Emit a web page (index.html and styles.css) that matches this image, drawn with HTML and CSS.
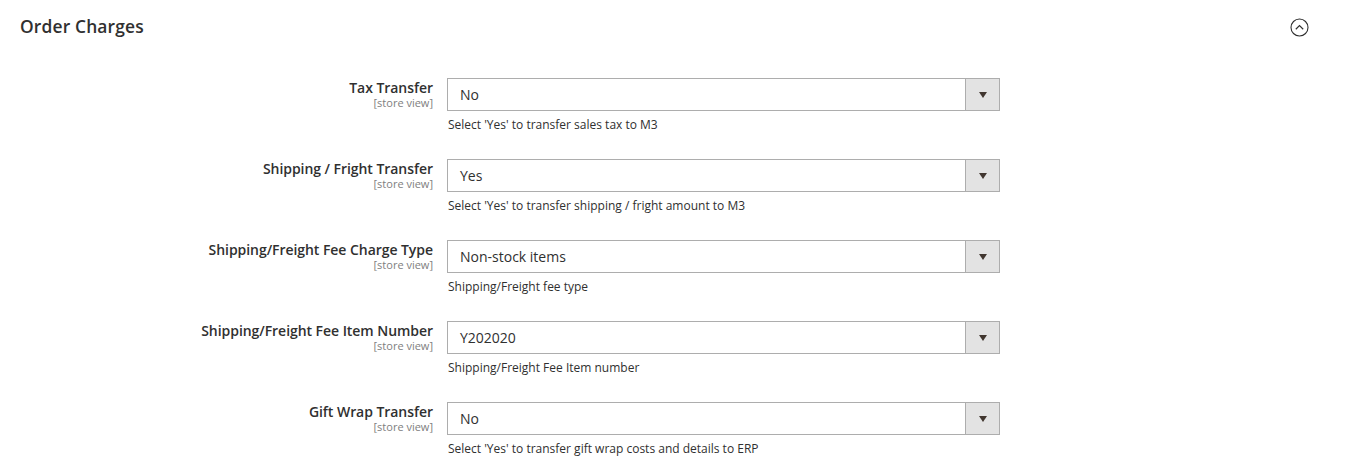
FILE: index.html
```html
<!DOCTYPE html>
<html lang="en">
<head>
<meta charset="utf-8">
<title>Order Charges</title>
<link rel="stylesheet" href="styles.css">
</head>
<body>
<section class="section">
  <header class="section-head">
    <h2 class="section-title">Order Charges</h2>
    <span class="collapse-icon" aria-hidden="true">
      <svg width="19" height="19" viewBox="0 0 19 19"><circle cx="9.5" cy="9.5" r="8.5" fill="none" stroke="#303030" stroke-width="1.1"/><path d="M5.8 11.2 L9.5 7.6 L13.2 11.2" fill="none" stroke="#303030" stroke-width="1.2"/></svg>
    </span>
  </header>
  <div class="rows">
    <div class="row">
      <div class="label"><span class="label-text">Tax Transfer</span><span class="scope">[store view]</span></div>
      <div class="control">
        <div class="select"><span class="value">No</span><span class="arrow"></span></div>
        <p class="note">Select 'Yes' to transfer sales tax to M3</p>
      </div>
    </div>
    <div class="row">
      <div class="label"><span class="label-text">Shipping / Fright Transfer</span><span class="scope">[store view]</span></div>
      <div class="control">
        <div class="select"><span class="value">Yes</span><span class="arrow"></span></div>
        <p class="note">Select 'Yes' to transfer shipping / fright amount to M3</p>
      </div>
    </div>
    <div class="row">
      <div class="label"><span class="label-text">Shipping/Freight Fee Charge Type</span><span class="scope">[store view]</span></div>
      <div class="control">
        <div class="select"><span class="value">Non-stock items</span><span class="arrow"></span></div>
        <p class="note">Shipping/Freight fee type</p>
      </div>
    </div>
    <div class="row">
      <div class="label"><span class="label-text">Shipping/Freight Fee Item Number</span><span class="scope">[store view]</span></div>
      <div class="control">
        <div class="select"><span class="value">Y202020</span><span class="arrow"></span></div>
        <p class="note">Shipping/Freight Fee Item number</p>
      </div>
    </div>
    <div class="row">
      <div class="label"><span class="label-text">Gift Wrap Transfer</span><span class="scope">[store view]</span></div>
      <div class="control">
        <div class="select"><span class="value">No</span><span class="arrow"></span></div>
        <p class="note">Select 'Yes' to transfer gift wrap costs and details to ERP</p>
      </div>
    </div>
  </div>
</section>
</body>
</html>
```
FILE: styles.css
```css
* { box-sizing: border-box; }
html, body { margin: 0; padding: 0; background: #fff; }
body {
  font-family: "Open Sans", "Liberation Sans", sans-serif;
  color: #303030;
  width: 1346px;
  height: 475px;
  overflow: hidden;
}
.section { padding: 0 0 0 20px; }
.section-head {
  display: flex;
  align-items: center;
  justify-content: space-between;
  height: 52px;
  padding-right: 37px;
}
.section-title {
  margin: 0;
  font-size: 17.4px;
  font-weight: 600;
  color: #303030;
  letter-spacing: 0.15px;
  line-height: 20px;
}
.collapse-icon { display: flex; padding-top: 2px; }
.rows { padding-top: 26px; }
.row {
  display: flex;
  align-items: flex-start;
  gap: 14px;
  height: 81px;
}
.label {
  width: 413px;
  display: flex;
  flex-direction: column;
  align-items: flex-end;
  padding-top: 1px;
}
.label-text {
  font-size: 14px;
  font-weight: 600;
  line-height: 18px;
  color: #303030;
  letter-spacing: -0.05px;
}
.scope {
  font-size: 11px;
  line-height: 11px;
  color: #808080;
  margin-top: 0;
}
.control { width: 553px; }
.select {
  display: flex;
  height: 33px;
  border: 1px solid #adadad;
  background: #fff;
}
.value {
  flex: 1;
  font-size: 14px;
  line-height: 31px;
  padding-left: 12px;
  color: #303030;
}
.arrow {
  width: 34px;
  background: #e3e3e3;
  border-left: 1px solid #adadad;
  display: flex;
  align-items: center;
  justify-content: center;
}
.arrow::after {
  content: "";
  width: 0;
  height: 0;
  border-left: 4.5px solid transparent;
  border-right: 4.5px solid transparent;
  border-top: 6px solid #41362f;
}
.note {
  margin: 5px 0 0 1px;
  font-size: 12px;
  line-height: 17px;
  color: #303030;
}
```
